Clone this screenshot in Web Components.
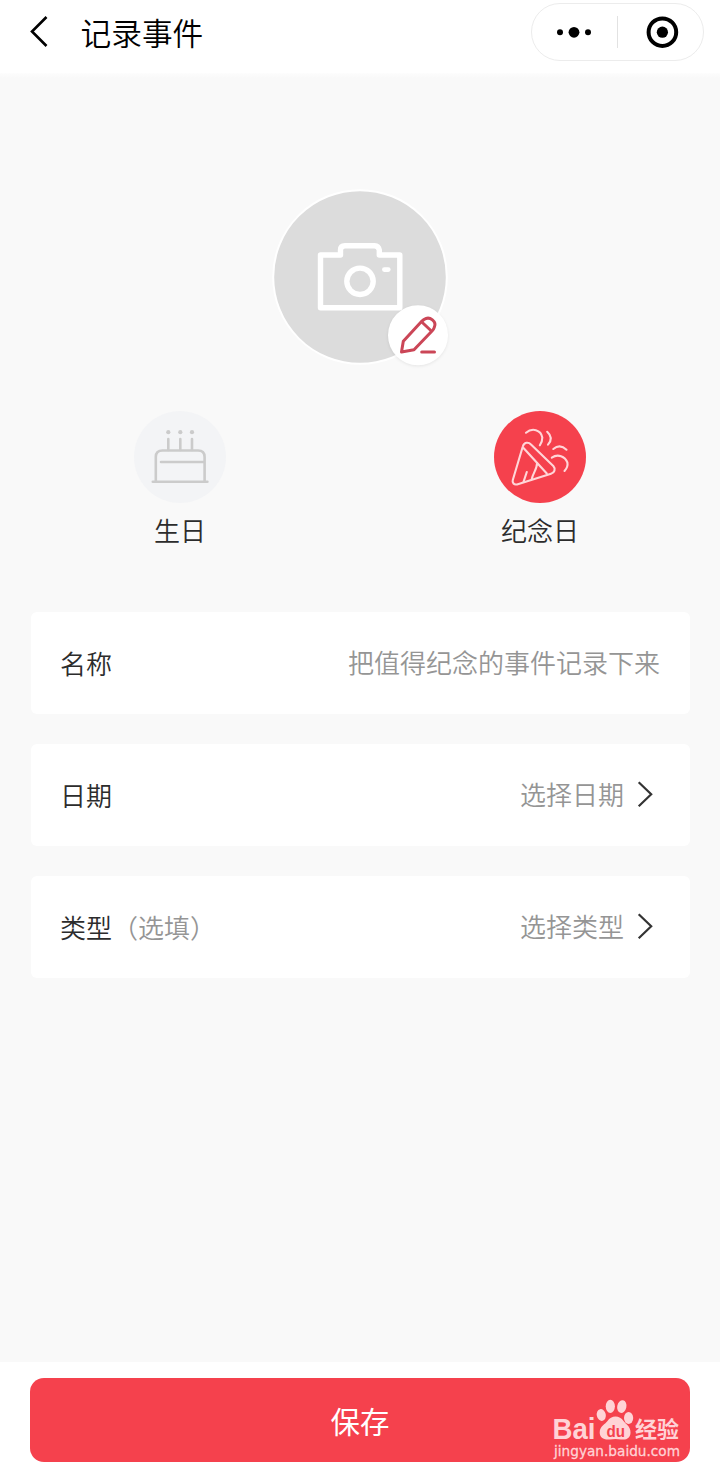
<!DOCTYPE html>
<html lang="zh-CN">
<head>
  <meta charset="UTF-8">
  <meta name="viewport" content="width=device-width, initial-scale=1.0">
  <title>记录事件</title>
  <style>
    body {
      margin: 0;
      background: white;
      font-family: "Noto Sans CJK SC", sans-serif;
      font-weight: 350;
      color: #2c2c2c;
    }
  </style>
</head>
<body>
  <event-page>
    <nav-bar slot="nav">记录事件</nav-bar>
    <avatar-picker></avatar-picker>
    <type-tabs>
      <type-tab icon="cake">生日</type-tab>
      <type-tab icon="popper" selected>纪念日</type-tab>
    </type-tabs>
    <form-list>
      <form-row>名称<span slot="value">把值得纪念的事件记录下来</span></form-row>
      <form-row arrow>日期<span slot="value">选择日期</span></form-row>
      <form-row arrow>类型<span slot="hint">（选填）</span><span slot="value">选择类型</span></form-row>
    </form-list>
    <save-bar slot="footer">保存</save-bar>
  </event-page>

  <script>
    class EventPage extends HTMLElement {
      constructor() {
        super()
        this.attachShadow({ mode: 'open' })
        this.shadowRoot.innerHTML = `
          <style>
            :host {
              display: flex;
              flex-direction: column;
              height: 1477px;
              overflow: hidden;
            }

            main {
              flex: 1;
              background: linear-gradient(#fdfdfd, #f9f9f9 5px);
            }
          </style>
          <slot name="nav"></slot>
          <main><slot></slot></main>
          <slot name="footer"></slot>
        `
      }
    }

    class NavBar extends HTMLElement {
      constructor() {
        super()
        this.attachShadow({ mode: 'open' })
        this.shadowRoot.innerHTML = `
          <style>
            :host {
              display: flex;
              align-items: flex-start;
              box-sizing: border-box;
              height: 73px;
              padding: 3px 16px 0 24px;
              background: white;
              color: black;
            }

            #back {
              flex: none;
              width: 32px;
              height: 58px;
            }

            h1 {
              flex: 1;
              margin: 0 0 0 24.5px;
              font-size: 30.7px;
              font-weight: inherit;
              line-height: 58px;
            }

            #capsule {
              display: flex;
              align-items: center;
              box-sizing: border-box;
              width: 173px;
              height: 58px;
              border: 1px solid #ececec;
              border-radius: 29px;
            }

            #capsule svg {
              flex: 1;
              height: 56px;
            }

            #divider {
              width: 1px;
              height: 32px;
              background: #e2e2e2;
            }
          </style>
          <svg id="back" viewBox="24 3 32 58" fill="none" stroke="currentColor" stroke-width="2.6">
            <path d="M46.5 17 32 31.5 46.5 46"/>
          </svg>
          <h1><slot></slot></h1>
          <div id="capsule">
            <svg viewBox="532 4 85 56">
              <circle cx="560" cy="32.3" r="3"/>
              <circle cx="574" cy="32.3" r="5.4"/>
              <circle cx="588" cy="32.3" r="3"/>
            </svg>
            <div id="divider"></div>
            <svg viewBox="618 4 85 56">
              <circle cx="662.4" cy="32.2" r="13.8" fill="none" stroke="black" stroke-width="4"/>
              <circle cx="662.4" cy="32.2" r="5.6"/>
            </svg>
          </div>
        `
      }
    }

    class AvatarPicker extends HTMLElement {
      constructor() {
        super()
        this.attachShadow({ mode: 'open' })
        this.shadowRoot.innerHTML = `
          <style>
            :host {
              display: flex;
              justify-content: center;
              padding-top: 114px;
            }

            svg {
              width: 180px;
              height: 190px;
            }

            #badge {
              filter: drop-shadow(0 1px 1.5px rgba(0,0,0,0.08));
            }
          </style>
          <svg viewBox="270 187 180 190" fill="none" stroke-linecap="round" stroke-linejoin="round">
            <circle cx="360" cy="277" r="86.8" fill="#dcdcdc" stroke="white" stroke-width="2"/>
            <g stroke="white" stroke-width="5.4">
              <path d="M320.5 255H340.5V250Q340.5 245.7 345 245.7H374.5Q378.5 246 379.3 250V255H399.8V307.7H320.5Z"/>
              <circle cx="360" cy="281.3" r="13.2"/>
              <path d="M384.3 269.6h4" stroke-width="4.6"/>
            </g>
            <circle id="badge" cx="418" cy="335.3" r="30" fill="white"/>
            <g stroke="#cb4657" stroke-width="3">
              <path d="M401.5 352 403.3 341.3 421.5 321.5 424 319.5C430 315.5 437 322 434.3 327.3Q433.8 329 432 331L414 349.7Z"/>
              <path d="M421.8 322 430.3 330"/>
              <path d="M421.7 352H434.5"/>
            </g>
          </svg>
        `
      }
    }

    class TypeTabs extends HTMLElement {
      constructor() {
        super()
        this.attachShadow({ mode: 'open' })
        this.shadowRoot.innerHTML = `
          <style>
            :host {
              display: grid;
              grid-template-columns: 1fr 1fr;
              padding-top: 34px;
            }
          </style>
          <slot></slot>
        `
      }
    }

    const tabIcons = {
      cake: `
        <svg viewBox="134 411 92 92" stroke="#cbcbcb" stroke-width="2.6">
          <path d="M152.8 481.7H207.4M155.8 481V457Q155.8 450.5 162.5 450.5H198Q204.6 450.5 204.6 457V481M161 462H204"/>
          <path d="M168.3 439V450M180.3 439V450M192 439V450"/>
          <g fill="#cbcbcb" stroke="none">
            <circle cx="168.3" cy="432.2" r="2.1"/>
            <circle cx="180.3" cy="432.2" r="2.1"/>
            <circle cx="192" cy="432.2" r="2.1"/>
          </g>
        </svg>`,
      popper: `
        <svg viewBox="494 411 92 92" stroke="#ffd6d8" stroke-width="2.1">
          <path d="M522.8 446.5C524 442 528.5 441.8 531 444.5L553.3 466C556 469 554.5 472.8 551 473.8L517 484.4C514 485.2 512 482.5 512.8 480Z"/>
          <path d="M523.5 448 546.8 473.5M526.8 472 523.6 481.6M537 463.5C537 469 533 473 531.8 479"/>
          <path d="M526 432.7C532 427.5 541 429.5 542.3 437.5Q542.4 442 539.8 445.3"/>
          <path d="M547.2 431.8Q554 438 548 444.6"/>
          <path d="M553.3 449Q560 443.5 566.5 449.7"/>
          <path d="M551.8 457.6C558 453.5 565 456.5 567.4 462.5Q568.2 467 564.5 471"/>
        </svg>`
    }

    class TypeTab extends HTMLElement {
      constructor() {
        super()
        this.attachShadow({ mode: 'open' })
        this.shadowRoot.innerHTML = `
          <style>
            :host {
              display: flex;
              flex-direction: column;
              align-items: center;
              font-size: 26px;
              line-height: 38px;
            }

            #icon {
              width: 92px;
              height: 92px;
              margin-bottom: 8px;
              border-radius: 50%;
              background: #f3f4f6;
            }

            :host([selected]) #icon {
              background: #f5414d;
            }

            svg {
              display: block;
              fill: none;
              stroke-linecap: round;
              stroke-linejoin: round;
            }
          </style>
          <div id="icon">${tabIcons[this.getAttribute('icon')]}</div>
          <slot></slot>
        `
      }
    }

    class FormList extends HTMLElement {
      constructor() {
        super()
        this.attachShadow({ mode: 'open' })
        this.shadowRoot.innerHTML = `
          <style>
            :host {
              display: flex;
              flex-direction: column;
              gap: 30px;
              padding: 63px 30px 0 31px;
            }
          </style>
          <slot></slot>
        `
      }
    }

    class FormRow extends HTMLElement {
      constructor() {
        super()
        this.attachShadow({ mode: 'open' })
        this.shadowRoot.innerHTML = `
          <style>
            :host {
              display: flex;
              align-items: center;
              box-sizing: border-box;
              height: 102px;
              padding: 0 30px 0 29px;
              border-radius: 6px;
              background: white;
              font-size: 26px;
              line-height: 38px;
            }

            #value {
              margin-left: auto;
              margin-top: -2px;
            }

            #value,
            ::slotted([slot="hint"]) {
              color: #959595;
            }

            svg {
              display: none;
              width: 18px;
              height: 28px;
              margin: -2px 5px 0 13px;
            }

            :host([arrow]) svg {
              display: block;
            }
          </style>
          <div><slot></slot><slot name="hint"></slot></div>
          <div id="value"><slot name="value"></slot></div>
          <svg viewBox="637 780 18 28" fill="none" stroke="#333" stroke-width="2.2">
            <path d="M638.7 782.2 651.2 794.2 638.7 806.2"/>
          </svg>
        `
      }
    }

    class SaveBar extends HTMLElement {
      constructor() {
        super()
        this.attachShadow({ mode: 'open' })
        this.shadowRoot.innerHTML = `
          <style>
            :host {
              display: block;
              position: relative;
              box-sizing: border-box;
              height: 115px;
              padding: 16px 30px 0;
              background: white;
            }

            button {
              display: block;
              width: 100%;
              height: 84px;
              padding: 0;
              border: 0;
              border-radius: 14px;
              background: #f5414d;
              color: white;
              font-family: inherit;
              font-size: 29.5px;
              font-weight: 400;
            }

            site-mark {
              position: absolute;
              right: 36px;
              bottom: 7px;
            }
          </style>
          <button><slot></slot></button>
          <site-mark></site-mark>
        `
      }
    }

    class SiteMark extends HTMLElement {
      constructor() {
        super()
        this.attachShadow({ mode: 'open' })
        this.shadowRoot.innerHTML = `
          <style>
            :host {
              display: block;
              width: 134px;
              height: 72px;
            }

            svg {
              display: block;
              overflow: visible;
            }

            text {
              font-family: "Liberation Sans", sans-serif;
              font-weight: 700;
            }

            #cn {
              font-family: "Noto Sans CJK SC", sans-serif;
            }

            #url {
              font-family: "DejaVu Sans", sans-serif;
              font-weight: 400;
              stroke: #ffd3d6;
              stroke-width: 0.3px;
            }
          </style>
          <svg width="134" height="72" viewBox="550 1398 134 72" fill="#ffd3d6">
            <text x="552.5" y="1439" font-size="29" textLength="43" lengthAdjust="spacingAndGlyphs">Bai</text>
            <ellipse cx="601.3" cy="1415" rx="4.5" ry="6" transform="rotate(-12 601.3 1415)"/>
            <ellipse cx="610.3" cy="1406.3" rx="4.6" ry="6.6"/>
            <ellipse cx="621.8" cy="1406.6" rx="4.6" ry="6.4" transform="rotate(12 621.8 1406.6)"/>
            <ellipse cx="628.6" cy="1418" rx="4.6" ry="6"/>
            <path d="M607.5 1421C611 1415 620 1415 623.5 1421C625.5 1424 630.5 1426 630.5 1432.5C630.5 1438 626.5 1440.3 621 1439.4Q615.5 1438.4 610 1439.4C604 1440.3 599.7 1437.5 599.7 1432.5C599.7 1426 605.5 1424 607.5 1421Z"/>
            <text x="606.5" y="1436.5" font-size="17" textLength="18.5" lengthAdjust="spacingAndGlyphs" fill="#f5414d">du</text>
            <text id="cn" x="635" y="1437" font-size="21.5" textLength="44" lengthAdjust="spacingAndGlyphs">经验</text>
            <text id="url" x="554" y="1456" font-size="14.5" textLength="126" lengthAdjust="spacingAndGlyphs">jingyan.baidu.com</text>
          </svg>
        `
      }
    }

    customElements.define('event-page', EventPage)
    customElements.define('nav-bar', NavBar)
    customElements.define('avatar-picker', AvatarPicker)
    customElements.define('type-tabs', TypeTabs)
    customElements.define('type-tab', TypeTab)
    customElements.define('form-list', FormList)
    customElements.define('form-row', FormRow)
    customElements.define('site-mark', SiteMark)
    customElements.define('save-bar', SaveBar)
  </script>
</body>
</html>
